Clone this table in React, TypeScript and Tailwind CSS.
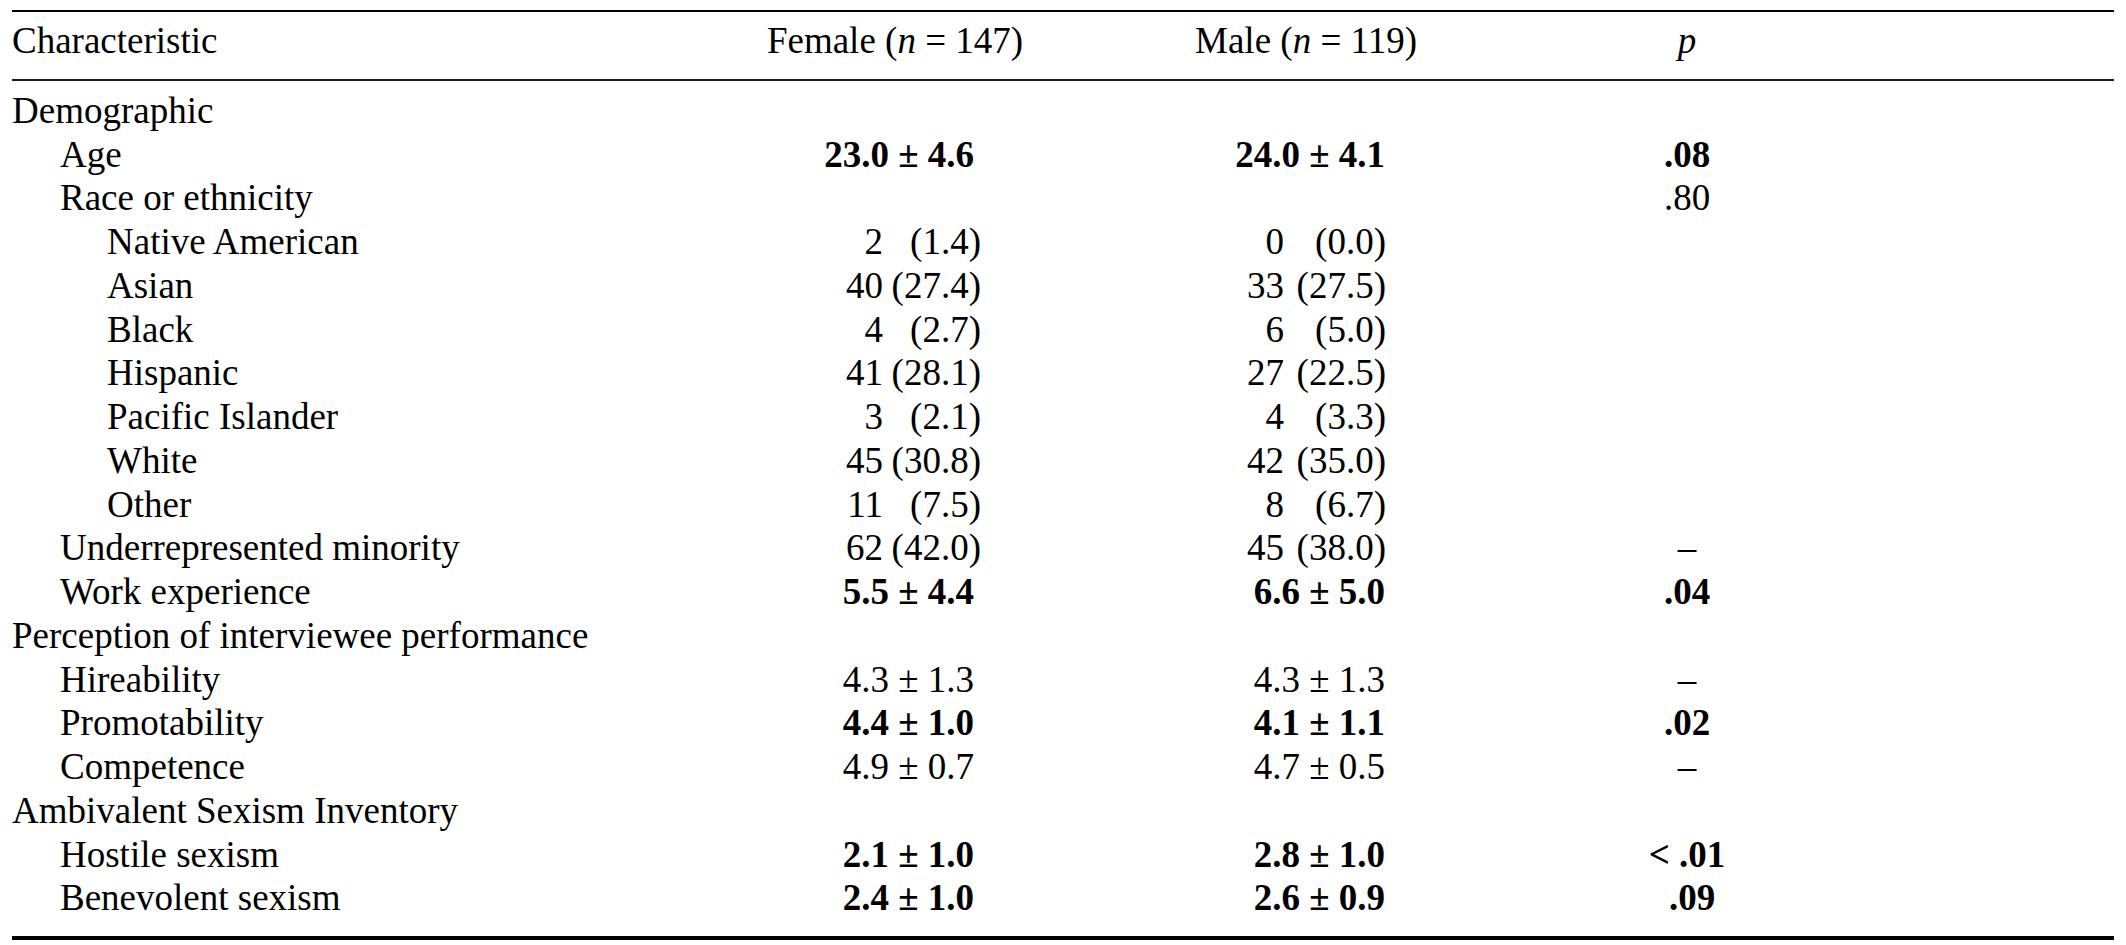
type Cell =
  | { kind: "val"; text: string; bold?: boolean }
  | { kind: "count"; n: string; pct: string }
  | null;

type Row = {
  label: string;
  level: 0 | 1 | 2;
  female?: Cell;
  male?: Cell;
  p?: string;
  pBold?: boolean;
  pShift?: boolean;
};

const val = (text: string, bold = false): Cell => ({ kind: "val", text, bold });
const cnt = (n: string, pct: string): Cell => ({ kind: "count", n, pct });

const rows: Row[] = [
  { label: "Demographic", level: 0 },
  { label: "Age", level: 1, female: val("23.0 ± 4.6", true), male: val("24.0 ± 4.1", true), p: ".08", pBold: true },
  { label: "Race or ethnicity", level: 1, p: ".80" },
  { label: "Native American", level: 2, female: cnt("2", "(1.4)"), male: cnt("0", "(0.0)") },
  { label: "Asian", level: 2, female: cnt("40", "(27.4)"), male: cnt("33", "(27.5)") },
  { label: "Black", level: 2, female: cnt("4", "(2.7)"), male: cnt("6", "(5.0)") },
  { label: "Hispanic", level: 2, female: cnt("41", "(28.1)"), male: cnt("27", "(22.5)") },
  { label: "Pacific Islander", level: 2, female: cnt("3", "(2.1)"), male: cnt("4", "(3.3)") },
  { label: "White", level: 2, female: cnt("45", "(30.8)"), male: cnt("42", "(35.0)") },
  { label: "Other", level: 2, female: cnt("11", "(7.5)"), male: cnt("8", "(6.7)") },
  { label: "Underrepresented minority", level: 1, female: cnt("62", "(42.0)"), male: cnt("45", "(38.0)"), p: "–" },
  { label: "Work experience", level: 1, female: val("5.5 ± 4.4", true), male: val("6.6 ± 5.0", true), p: ".04", pBold: true },
  { label: "Perception of interviewee performance", level: 0 },
  { label: "Hireability", level: 1, female: val("4.3 ± 1.3"), male: val("4.3 ± 1.3"), p: "–" },
  { label: "Promotability", level: 1, female: val("4.4 ± 1.0", true), male: val("4.1 ± 1.1", true), p: ".02", pBold: true },
  { label: "Competence", level: 1, female: val("4.9 ± 0.7"), male: val("4.7 ± 0.5"), p: "–" },
  { label: "Ambivalent Sexism Inventory", level: 0 },
  { label: "Hostile sexism", level: 1, female: val("2.1 ± 1.0", true), male: val("2.8 ± 1.0", true), p: "< .01", pBold: true },
  { label: "Benevolent sexism", level: 1, female: val("2.4 ± 1.0", true), male: val("2.6 ± 0.9", true), p: ".09", pBold: true, pShift: true },
];

const indent = ["pl-0", "pl-[48px]", "pl-[95px]"];

function FemaleCell({ cell }: { cell?: Cell }) {
  if (!cell) return <div className="w-[310px]" />;
  if (cell.kind === "val")
    return (
      <div className={`w-[310px] pr-[76px] text-right ${cell.bold ? "font-bold" : ""}`}>{cell.text}</div>
    );
  return (
    <div className="flex w-[310px]">
      <span className="w-[143px] text-right">{cell.n}</span>
      <span className="w-[98px] text-right">{cell.pct}</span>
    </div>
  );
}

function MaleCell({ cell }: { cell?: Cell }) {
  if (!cell) return <div className="w-[312px]" />;
  if (cell.kind === "val")
    return (
      <div className={`w-[312px] pr-[77px] text-right ${cell.bold ? "font-bold" : ""}`}>{cell.text}</div>
    );
  return (
    <div className="flex w-[312px]">
      <span className="w-[134px] text-right">{cell.n}</span>
      <span className="w-[102px] text-right">{cell.pct}</span>
    </div>
  );
}

export default function App() {
  return (
    <div
      className="min-h-screen w-full bg-white pl-[12px] pt-[10px] text-[37px] leading-[43.75px] text-black"
      style={{ fontFamily: '"Liberation Serif", "Times New Roman", serif' }}
    >
      <div className="w-[2102px] border-t-2 border-black">
        {/* Header */}
        <div className="flex border-b-2 border-[#1c1c1c] pt-[7px] pb-[16px] whitespace-nowrap">
          <div className="w-[728px]">Characteristic</div>
          <div className="w-[310px] text-center">
            Female (<i>n</i> = 147)
          </div>
          <div className="w-[100px]" />
          <div className="w-[312px] text-center">
            Male (<i>n</i> = 119)
          </div>
          <div className="w-[105px]" />
          <div className="w-[240px] text-center">
            <i>p</i>
          </div>
        </div>

        {/* Body */}
        <div className="border-b-4 border-black pt-[8px] pb-[16px]">
          {rows.map((r) => (
            <div key={r.label} className="flex h-[43.75px] whitespace-pre">
              <div className={`w-[728px] ${indent[r.level]}`}>{r.label}</div>
              <FemaleCell cell={r.female} />
              <div className="w-[100px]" />
              <MaleCell cell={r.male} />
              <div className="w-[105px]" />
              <div
                className={`w-[240px] text-center ${r.pBold ? "font-bold" : ""} ${r.pShift ? "pl-[10px]" : ""}`}
              >
                {r.p ?? ""}
              </div>
            </div>
          ))}
        </div>
      </div>
    </div>
  );
}
